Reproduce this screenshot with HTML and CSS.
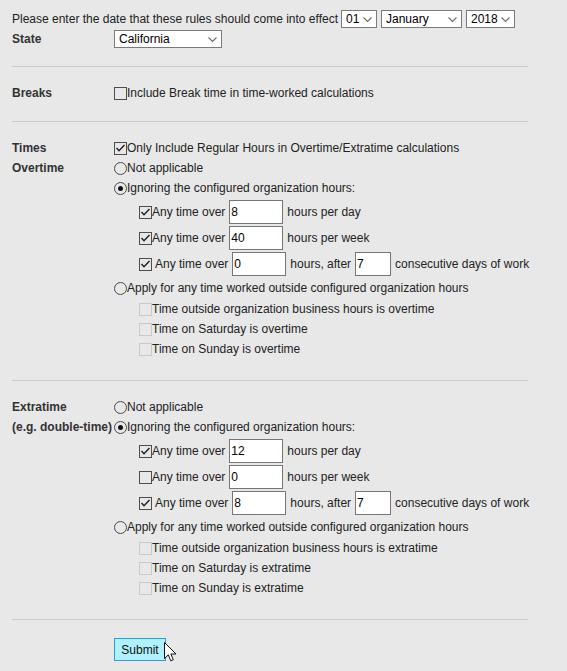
FILE: index.html
```html
<!DOCTYPE html>
<html lang="en">
<head>
<meta charset="utf-8">
<title>Overtime rules</title>
<link rel="stylesheet" href="styles.css">
</head>
<body>
<form class="page">
  <div class="top">
    <span>Please enter the date that these rules should come into effect</span>
    <span class="sel w-day"><select><option>01</option></select><svg viewBox="0 0 9 5"><polyline points="0.5,0.5 4.5,4.5 8.5,0.5"/></svg></span>
    <span class="sel w-month"><select><option>January</option></select><svg viewBox="0 0 9 5"><polyline points="0.5,0.5 4.5,4.5 8.5,0.5"/></svg></span>
    <span class="sel w-year"><select><option>2018</option></select><svg viewBox="0 0 9 5"><polyline points="0.5,0.5 4.5,4.5 8.5,0.5"/></svg></span>
  </div>
  <div class="state">
    <span class="b">State</span>
    <span class="sel w-state"><select><option>California</option></select><svg viewBox="0 0 9 5"><polyline points="0.5,0.5 4.5,4.5 8.5,0.5"/></svg></span>
  </div>

  <hr class="sep">

  <div class="sec">
    <div class="lbl"><div class="line b">Breaks</div></div>
    <div class="opts">
      <label class="line"><span class="cb"></span>Include Break time in time-worked calculations</label>
    </div>
  </div>

  <hr class="sep">

  <div class="sec">
    <div class="lbl">
      <div class="line b">Times</div>
      <div class="line b">Overtime</div>
    </div>
    <div class="opts">
      <label class="line"><span class="cb"><svg viewBox="0 0 11 11"><polyline points="1.5,5 4,7.8 9.5,2"/></svg></span>Only Include Regular Hours in Overtime/Extratime calculations</label>
      <label class="line"><span class="rd"></span>Not applicable</label>
      <label class="line"><span class="rd on"></span>Ignoring the configured organization hours:</label>
      <div class="inrows">
        <div class="inrow"><span class="cb"><svg viewBox="0 0 11 11"><polyline points="1.5,5 4,7.8 9.5,2"/></svg></span><span>Any time over</span><input class="num" value="8"><span>hours per day</span></div>
        <div class="inrow"><span class="cb"><svg viewBox="0 0 11 11"><polyline points="1.5,5 4,7.8 9.5,2"/></svg></span><span>Any time over</span><input class="num" value="40"><span>hours per week</span></div>
        <div class="inrow"><span class="cb"><svg viewBox="0 0 11 11"><polyline points="1.5,5 4,7.8 9.5,2"/></svg></span><span class="sp">Any time over</span><input class="num tight" value="0"><span>hours, after</span><input class="num short" value="7"><span>consecutive days of work</span></div>
      </div>
      <label class="line"><span class="rd"></span>Apply for any time worked outside configured organization hours</label>
      <div class="subs">
        <label class="line"><span class="cb dis"></span>Time outside organization business hours is overtime</label>
        <label class="line"><span class="cb dis"></span>Time on Saturday is overtime</label>
        <label class="line"><span class="cb dis"></span>Time on Sunday is overtime</label>
      </div>
    </div>
  </div>

  <hr class="sep">

  <div class="sec">
    <div class="lbl">
      <div class="line b">Extratime</div>
      <div class="line b">(e.g. double-time)</div>
    </div>
    <div class="opts">
      <label class="line"><span class="rd"></span>Not applicable</label>
      <label class="line"><span class="rd on"></span>Ignoring the configured organization hours:</label>
      <div class="inrows">
        <div class="inrow"><span class="cb"><svg viewBox="0 0 11 11"><polyline points="1.5,5 4,7.8 9.5,2"/></svg></span><span>Any time over</span><input class="num" value="12"><span>hours per day</span></div>
        <div class="inrow"><span class="cb"></span><span>Any time over</span><input class="num" value="0"><span>hours per week</span></div>
        <div class="inrow"><span class="cb"><svg viewBox="0 0 11 11"><polyline points="1.5,5 4,7.8 9.5,2"/></svg></span><span class="sp">Any time over</span><input class="num tight" value="8"><span>hours, after</span><input class="num short" value="7"><span>consecutive days of work</span></div>
      </div>
      <label class="line"><span class="rd"></span>Apply for any time worked outside configured organization hours</label>
      <div class="subs">
        <label class="line"><span class="cb dis"></span>Time outside organization business hours is extratime</label>
        <label class="line"><span class="cb dis"></span>Time on Saturday is extratime</label>
        <label class="line"><span class="cb dis"></span>Time on Sunday is extratime</label>
      </div>
    </div>
  </div>

  <hr class="sep">

  <div class="submit-row">
    <button type="button" class="submit">Submit</button>
    <svg class="cursor" viewBox="0 0 13 20"><path d="M0.5,0.5 L0.5,16.5 L4.3,12.9 L6.8,18.8 L9.3,17.7 L6.9,12 L12,12 Z"/></svg>
  </div>
</form>
</body>
</html>
```

FILE: styles.css
```css
* { box-sizing: border-box; }
html, body { margin: 0; padding: 0; }
body {
  background: #e8e8e8;
  font: 12px "Liberation Sans", Arial, sans-serif;
  color: #222;
  width: 567px;
  height: 671px;
  overflow: hidden;
}
.page { width: 528px; padding: 10px 0 0 12px; }
.b { font-weight: bold; color: #333; white-space: nowrap; }

.top { display: flex; align-items: center; height: 18px; white-space: nowrap; }
.top .sel { margin-left: 3px; }
.top .sel + .sel { margin-left: 4px; }
.state {
  display: grid;
  grid-template-columns: 102px auto;
  align-items: center;
  height: 18px;
  margin-top: 2px;
}

.sel { position: relative; display: inline-block; height: 18px; }
.sel select {
  appearance: none;
  -webkit-appearance: none;
  display: block;
  width: 100%;
  height: 18px;
  margin: 0;
  padding: 0 0 0 4px;
  border: 1px solid #7a7a7a;
  border-radius: 0;
  background: #fff;
  color: #000;
  font: 12px "Liberation Sans", Arial, sans-serif;
  outline: none;
}
.sel svg {
  position: absolute;
  right: 5px;
  top: 7px;
  width: 9px;
  height: 5px;
  fill: none;
  stroke: #6e6e6e;
  stroke-width: 1.1;
  pointer-events: none;
}
.w-day { width: 36px; }
.w-month { width: 81px; }
.w-year { width: 49px; }
.w-state { width: 108px; }

.sep {
  display: block;
  height: 1px;
  border: 0;
  background: #cbcbcb;
  margin: 18px 0 16px;
}

.sec { display: grid; grid-template-columns: 102px 1fr; }
.line {
  display: flex;
  align-items: center;
  height: 20px;
  white-space: nowrap;
}

.cb {
  flex: none;
  display: inline-flex;
  align-items: center;
  justify-content: center;
  width: 13px;
  height: 13px;
  border: 1px solid #4d4d4d;
}
.cb svg { width: 11px; height: 11px; fill: none; stroke: #1f1f1f; stroke-width: 1.4; }
.cb.dis { border-color: #c9c9c9; }

.rd {
  flex: none;
  display: inline-flex;
  align-items: center;
  justify-content: center;
  width: 13px;
  height: 13px;
  border: 1px solid #4a4a4a;
  border-radius: 50%;
}
.rd.on::after {
  content: "";
  width: 5px;
  height: 5px;
  border-radius: 50%;
  background: #111;
}

.inrows { padding: 1px 0 1px 25px; }
.inrow {
  display: flex;
  align-items: center;
  height: 26px;
  white-space: nowrap;
}
.inrow .sp { margin-left: 3px; }
.num {
  flex: none;
  width: 54px;
  height: 24px;
  margin: 0 4px;
  padding: 0 0 0 1px;
  border: 1px solid #767676;
  border-radius: 0;
  background: #fff;
  color: #000;
  font: 12px "Liberation Sans", Arial, sans-serif;
  outline: none;
}
.num.tight { margin-left: 4px; }
.num.short { width: 36px; }

.subs { padding: 1px 0 3px 25px; }

.submit-row { position: relative; padding-left: 102px; padding-top: 2px; }
.submit {
  display: block;
  width: 52px;
  height: 23px;
  margin: 0;
  padding: 0;
  border: 1px solid #2a9fd8;
  border-radius: 0;
  background: #b0f1ff;
  color: #111;
  font: 12px "Liberation Sans", Arial, sans-serif;
}
.cursor {
  position: absolute;
  left: 152px;
  top: 6px;
  width: 13px;
  height: 20px;
  fill: #fff;
  stroke: #111;
  stroke-width: 1;
}
```
